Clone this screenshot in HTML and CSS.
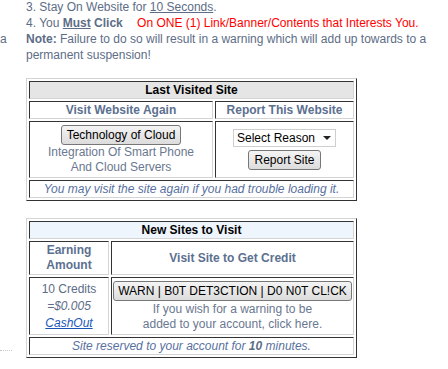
FILE: index.html
```html
<!DOCTYPE html>
<html lang="en">
<head>
  <meta charset="UTF-8">
  <title>Surf Sites</title>
  <link rel="stylesheet" href="styles.css">
</head>
<body>
<div class="page">
  <aside class="side">
    <p class="sideText">a</p>
    <div class="sideRule"></div>
  </aside>

  <div class="content">
    <div class="rules">
      <p>3. Stay On Website for <u>10 Seconds</u>.</p>
      <p>4. You <b><u>Must</u> Click</b> <span class="warn">On ONE (1) Link/Banner/Contents that Interests You.</span></p>
      <p><b>Note:</b> Failure to do so will result in a warning which will add up towards to a permanent suspension!</p>
    </div>

    <!-- last visited -->
    <table class="box">
      <tr>
        <td class="boxHead" colspan="2">Last Visited Site</td>
      </tr>
      <tr>
        <td class="colHead visitCol">Visit Website Again</td>
        <td class="colHead">Report This Website</td>
      </tr>
      <tr>
        <td class="siteCell">
          <button class="btn">Technology of Cloud</button>
          <div class="desc">Integration Of Smart Phone<br>And Cloud Servers</div>
        </td>
        <td class="reportCell">
          <span class="selectBox">Select Reason
            <svg width="8" height="4" viewBox="0 0 8 4"><path d="M0 0H8L4 4Z" fill="#222"/></svg>
          </span>
          <button class="btn reportBtn">Report Site</button>
        </td>
      </tr>
      <tr>
        <td class="foot" colspan="2">You may visit the site again if you had trouble loading it.</td>
      </tr>
    </table>

    <!-- new sites -->
    <table class="box">
      <tr>
        <td class="boxHead blueHead" colspan="2">New Sites to Visit</td>
      </tr>
      <tr>
        <td class="colHead earnCol">Earning<br>Amount</td>
        <td class="colHead">Visit Site to Get Credit</td>
      </tr>
      <tr>
        <td class="earnCell">
          10 Credits<br>
          <i>=$0.005</i><br>
          <a href="#" class="cashout">CashOut</a>
        </td>
        <td class="siteCell">
          <button class="btn wideBtn">WARN | B0T DET3CTION | D0 N0T CL!CK</button>
          <div class="desc">If you wish for a warning to be<br>added to your account, click here.</div>
        </td>
      </tr>
      <tr>
        <td class="foot" colspan="2">Site reserved to your account for <b>10</b> minutes.</td>
      </tr>
    </table>
  </div>
</div>
</body>
</html>
```

FILE: styles.css
```css
body {
  margin: 0;
  background: #fff;
  font-family: "Liberation Sans", Arial, sans-serif;
  font-size: 12px;
  color: #5d6d86;
}

.page {
  display: flex;
  height: 369px;
}

/* left column leftovers */
.side {
  width: 26px;
  flex-shrink: 0;
  display: flex;
  flex-direction: column;
}

.sideText {
  margin: 31px 0 0 0;
  line-height: 16px;
}

.sideRule {
  margin-top: auto;
  margin-bottom: 18px;
  width: 12px;
  border-top: 1px dotted #c8c8c8;
}

.content {
  width: 422px;
}

.rules {
  margin-top: -1px;
}

.rules p {
  margin: 0;
  line-height: 16px;
}

.warn {
  color: #ff0000;
  margin-left: 11px;
}

/* tables */
.box {
  width: 331px;
  border-collapse: separate;
  border-spacing: 2px;
  border: 1px solid;
  border-color: #d4d4d4 #333 #333 #d4d4d4;
  margin-top: 15px;
  text-align: center;
}

.box + .box {
  margin-top: 17px;
}

.box td {
  border: 1px solid;
  border-color: #333 #d4d4d4 #d4d4d4 #333;
  padding: 0 1px;
  line-height: 16px;
  vertical-align: middle;
}

.boxHead {
  background: #e5e5e5;
  color: #000;
  font-weight: bold;
}

.blueHead {
  background: #eef5fd;
}

.colHead {
  font-weight: bold;
  color: #5c7090;
}

.visitCol {
  width: 180px;
}

.box td.earnCol {
  width: 77px;
  padding: 1px;
  line-height: 15px;
}

.box td.siteCell {
  padding: 3px 1px 2px 1px;
  line-height: 15px;
}

.box td.reportCell {
  line-height: 15px;
}

.desc {
  margin-top: 0;
  color: #6a7890;
}

.btn {
  display: block;
  margin: 0 auto;
  font-family: "Liberation Sans", Arial, sans-serif;
  font-size: 12px;
  color: #000;
  height: 20px;
  padding: 0 5px;
  border: 1px solid #777;
  border-radius: 3px;
  background: linear-gradient(#f4f4f4, #dcdcdc);
  line-height: 18px;
}

.reportBtn {
  margin-top: 3px;
}

.wideBtn {
  width: 239px;
  padding: 0 2px;
  margin-bottom: 1px;
}

.selectBox {
  display: inline-flex;
  align-items: center;
  gap: 8px;
  height: 16px;
  padding: 0 4px 0 3px;
  border: 1px solid #cfcfcf;
  background: #fff;
  color: #000;
  line-height: 16px;
}

.box td.earnCell {
  padding: 2px 1px;
  line-height: 17px;
}

.cashout {
  color: #1a56b8;
  font-style: italic;
}

.box td.foot {
  font-style: italic;
  color: #5870a0;
  padding: 0 1px;
}

.foot b {
  color: #5d6d86;
}
```
